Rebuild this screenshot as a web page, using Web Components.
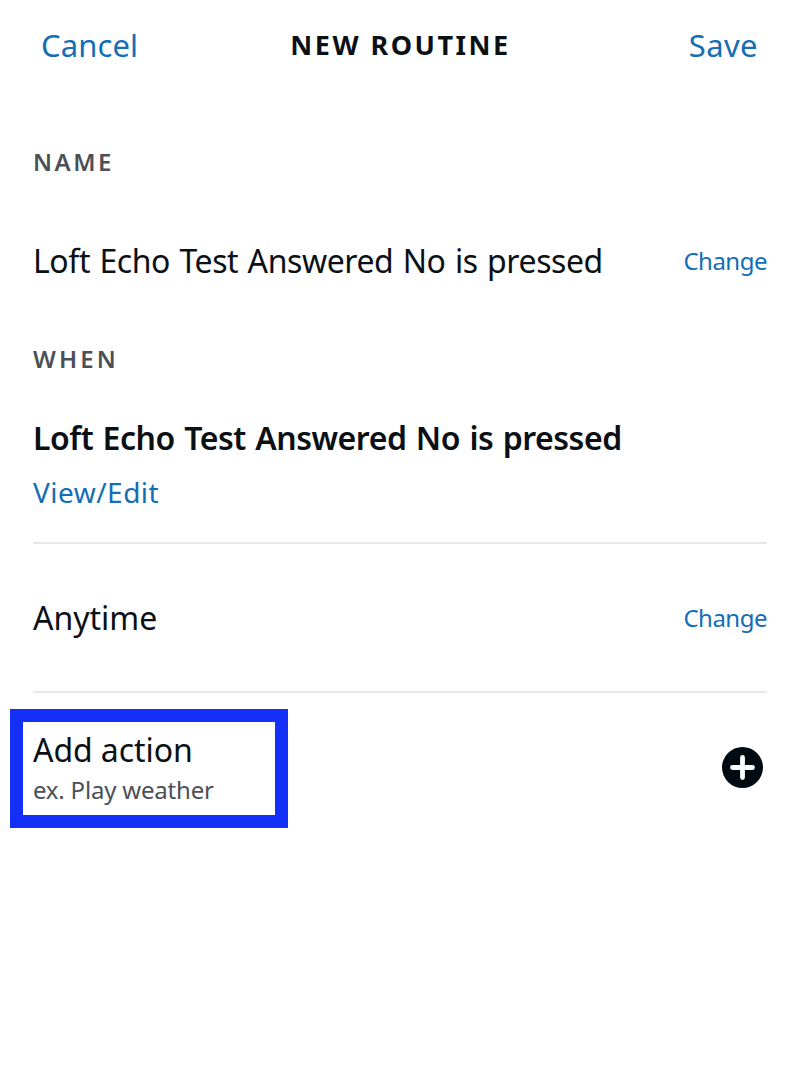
<!DOCTYPE html>
<html lang="en">
<head>
<meta charset="utf-8">
<title>New Routine</title>
<style>
  body { margin: 0; background: #fff; font-family: "Noto Sans", "Open Sans", sans-serif; color: #0b1015; }
</style>
</head>
<body>
<routine-page></routine-page>
<script>
  const define = (name, html) => {
    const template = document.createElement('template');
    template.innerHTML = html;
    customElements.define(name, class extends HTMLElement {
      constructor() {
        super();
        this.attachShadow({ mode: 'open' }).append(template.content.cloneNode(true));
      }
    });
  };

  define('link-button', `
    <style>
      :host { display: block; color: #146eb4; white-space: nowrap; }
      button { all: unset; display: block; cursor: pointer; }
    </style>
    <button><slot></slot></button>`);

  define('nav-header', `
    <style>
      :host { display: grid; grid-template-columns: 1fr auto 1fr; align-items: center; height: 90px; padding: 0 42px 0 41px; font-size: 31px; line-height: 40px; }
      h1 { margin: 0 0 0 2px; font-size: 27px; font-weight: 700; letter-spacing: 2.5px; line-height: 40px; white-space: nowrap; }
      ::slotted([slot=start]) { justify-self: start; letter-spacing: .1px; }
      ::slotted([slot=end]) { justify-self: end; letter-spacing: .4px; }
    </style>
    <slot name="start"></slot><h1><slot></slot></h1><slot name="end"></slot>`);

  define('section-label', `
    <style>
      :host { display: block; font-size: 24px; line-height: 32px; font-weight: 600; letter-spacing: var(--label-spacing, 3.1px); color: #4b5057; }
    </style>
    <slot></slot>`);

  define('setting-row', `
    <style>
      :host { display: flex; align-items: center; justify-content: space-between; font-size: 32px; line-height: 40px; }
      span { letter-spacing: var(--row-spacing, 0px); word-spacing: 1.5px; white-space: nowrap; }
      ::slotted(link-button) { font-size: 24px; letter-spacing: -.5px; }
    </style>
    <span><slot></slot></span><slot name="action"></slot>`);

  define('trigger-summary', `
    <style>
      :host { display: block; }
      h2 { margin: 0 0 16px; font-size: 32px; line-height: 40px; font-weight: 600; letter-spacing: -.46px; word-spacing: 1.5px; white-space: nowrap; }
      ::slotted(link-button) { font-size: 28px; line-height: 36px; letter-spacing: .48px; }
    </style>
    <h2><slot></slot></h2><slot name="link"></slot>`);

  define('row-divider', `
    <style>:host { display: block; height: 2px; background: #e6e7e8; }</style>`);

  define('add-button', `
    <style>:host { display: block; margin-bottom: 3px; } svg { display: block; }</style>
    <svg width="41" height="41" viewBox="0 0 41 41" role="img" aria-label="Add">
      <circle cx="20.5" cy="20.5" r="20.5" fill="#000a12"/>
      <path d="M20.5 10.5v20M10.5 20.5h20" stroke="#fff" stroke-width="4.8" stroke-linecap="round"/>
    </svg>`);

  define('action-row', `
    <style>
      :host { display: flex; justify-content: space-between; align-items: center; margin: 16px 4px 0 -23px; }
      .marked { box-sizing: border-box; width: 278px; height: 119px; border: 13px solid #1430f8; padding: 8px 0 0 10px; }
      .title { font-size: 32px; line-height: 40px; letter-spacing: -.07px; }
      .hint { font-size: 24px; line-height: 32px; letter-spacing: -.2px; color: #4b5057; margin-top: 4px; }
    </style>
    <div class="marked">
      <div class="title"><slot></slot></div>
      <div class="hint"><slot name="hint"></slot></div>
    </div>
    <add-button></add-button>`);

  define('routine-page', `
    <style>
      :host { display: block; height: 1076px; overflow: hidden; background: #fff; }
      main { padding: 0 33px; }
      .name-label { margin-top: 56px; --label-spacing: 2.5px; }
      .name-row { height: 68px; margin: 49px 0 48px; --row-spacing: -.42px; }
      trigger-summary { margin: 43px 0 32px; }
      .time-row { height: 147px; }
    </style>
    <nav-header>
      <link-button slot="start">Cancel</link-button>
      NEW ROUTINE
      <link-button slot="end">Save</link-button>
    </nav-header>
    <main>
      <section-label class="name-label">NAME</section-label>
      <setting-row class="name-row">Loft Echo Test Answered No is pressed<link-button slot="action">Change</link-button></setting-row>
      <section-label>WHEN</section-label>
      <trigger-summary>Loft Echo Test Answered No is pressed<link-button slot="link">View/Edit</link-button></trigger-summary>
      <row-divider></row-divider>
      <setting-row class="time-row">Anytime<link-button slot="action">Change</link-button></setting-row>
      <row-divider></row-divider>
      <action-row>Add action<span slot="hint">ex. Play weather</span></action-row>
    </main>`);
</script>
</body>
</html>
